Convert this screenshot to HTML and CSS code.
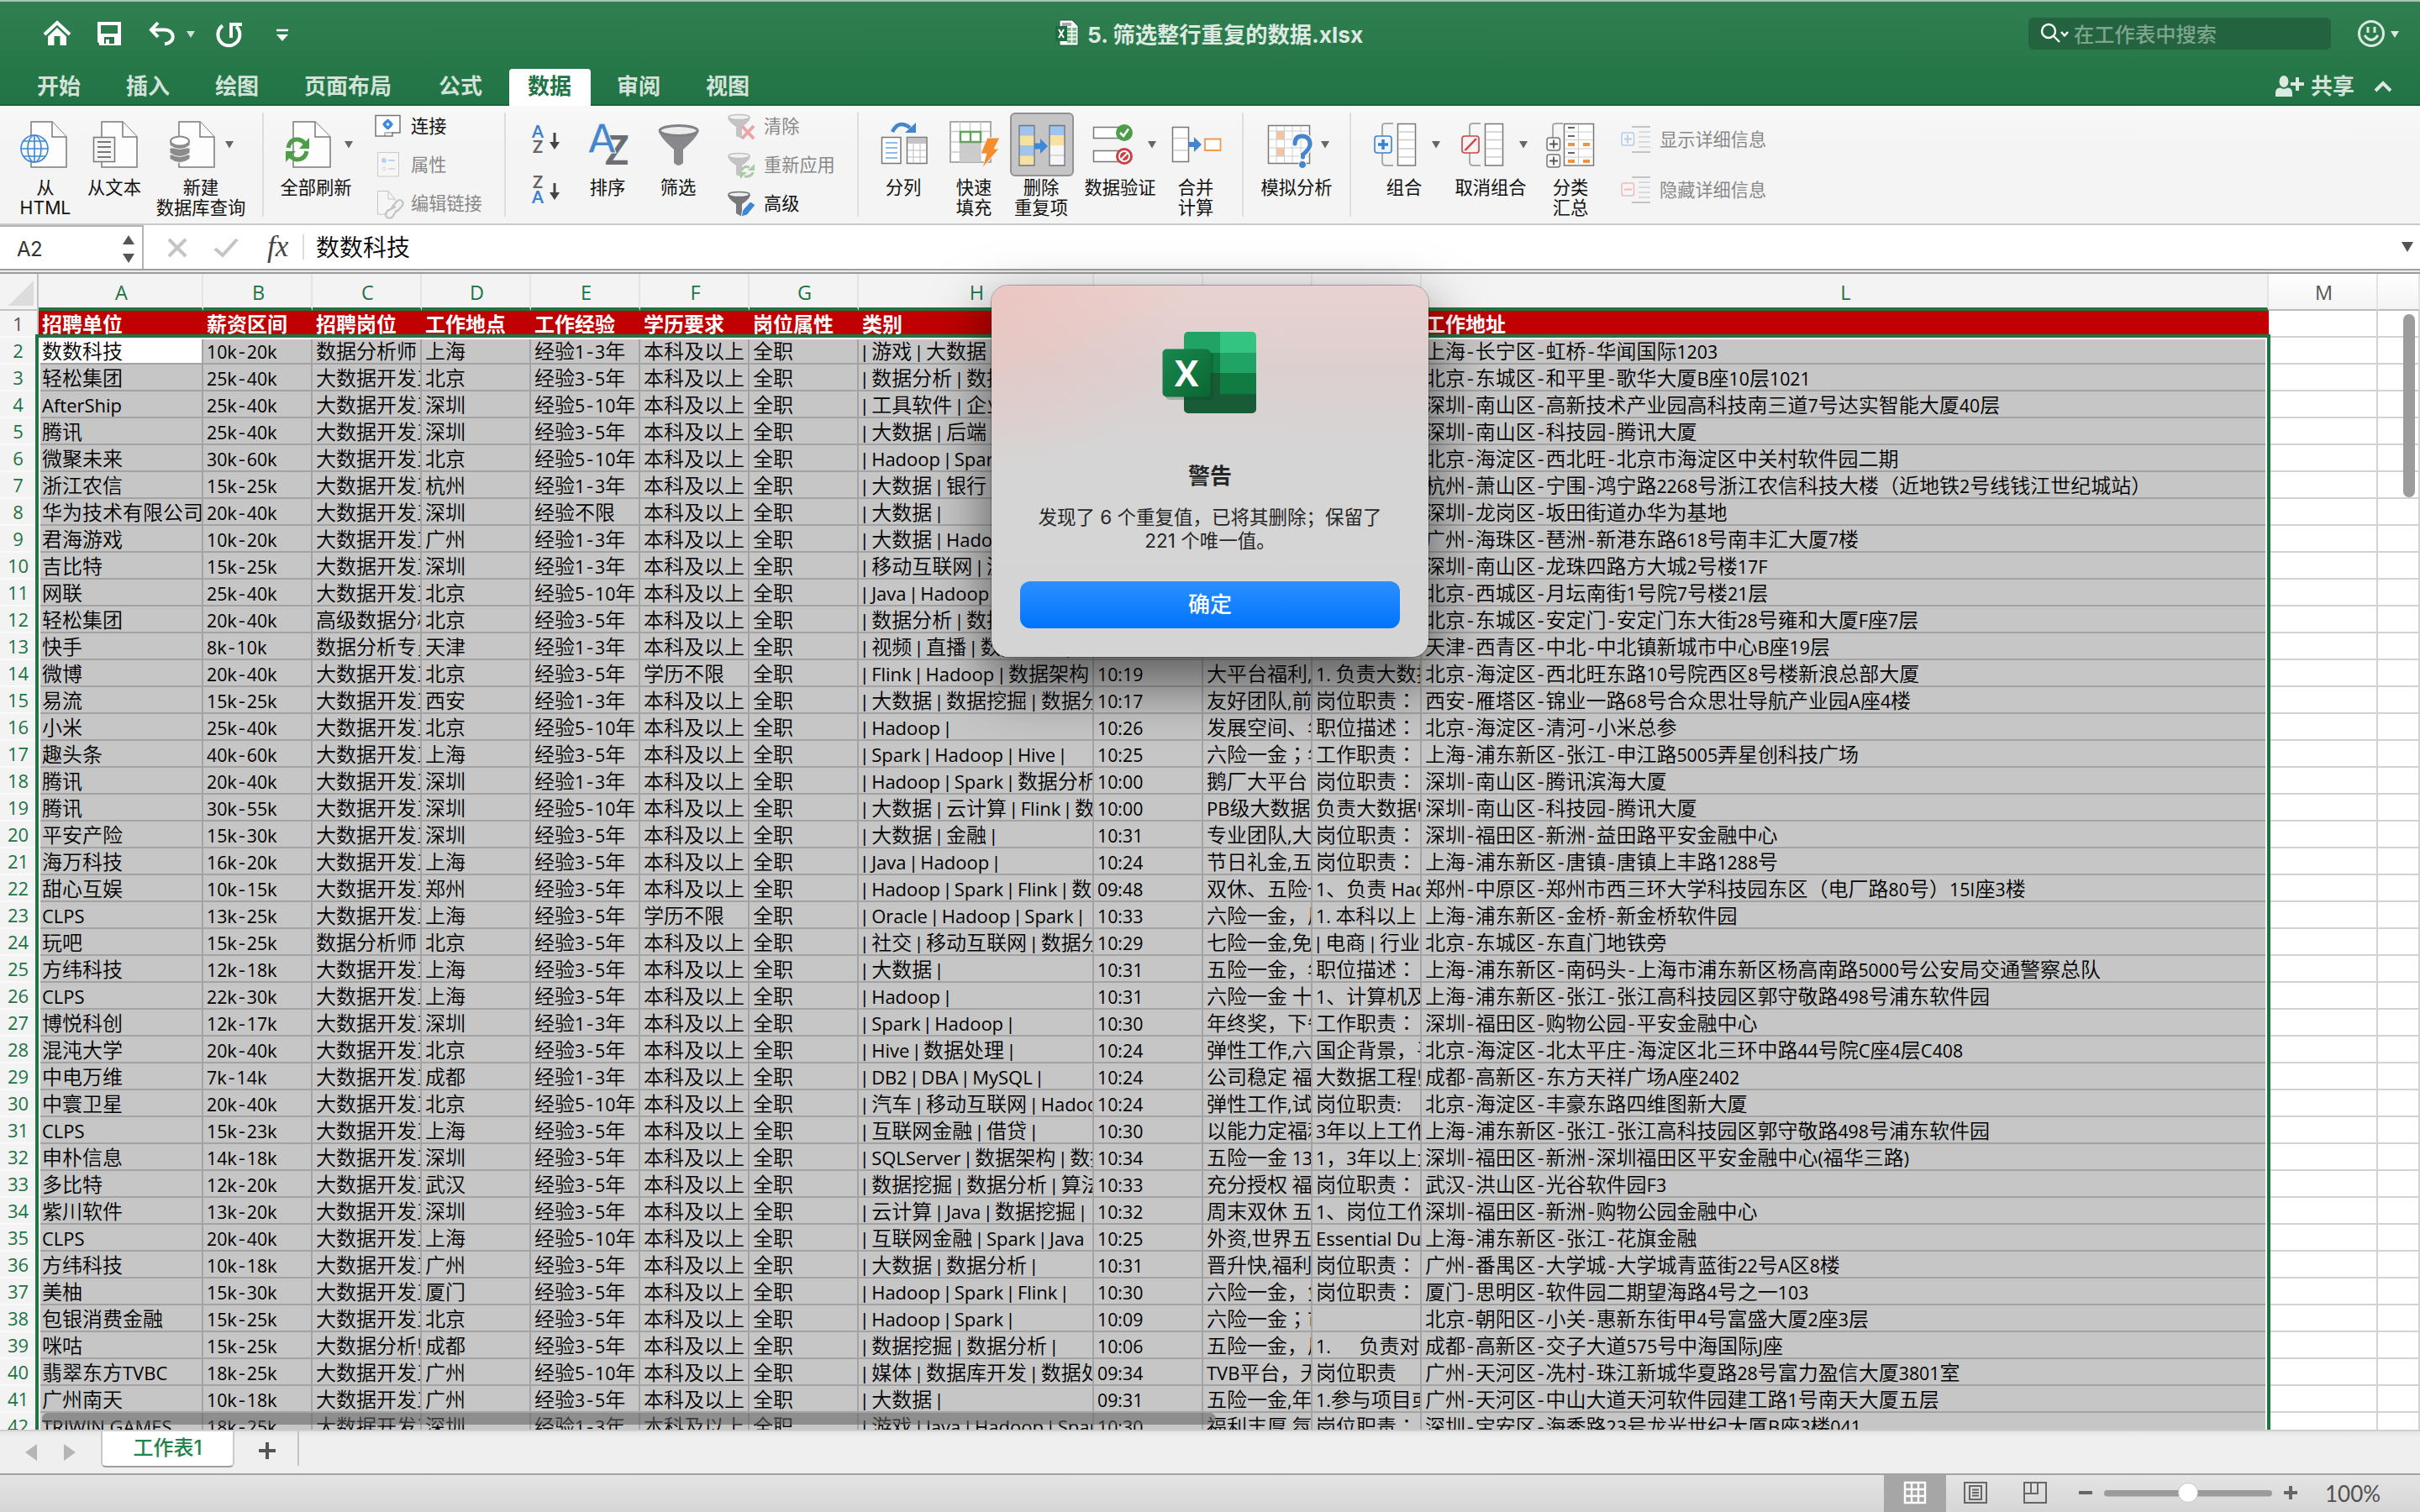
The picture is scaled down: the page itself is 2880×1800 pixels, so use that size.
FILE: index.html
```html
<!DOCTYPE html>
<html lang="zh-CN">
<head>
<meta charset="utf-8">
<title>5. 筛选整行重复的数据.xlsx</title>
<link rel="stylesheet" href="styles.css">
</head>
<body>
<div class="app">
  <header class="titlebar">
    <div class="quick">
      <svg width="400" height="80" viewBox="0 0 400 80" fill="none" stroke="#fff" stroke-width="4">
        <path d="M53 41L68 27L83 41"/><path d="M57 43.5L68 33L79 43.5V54H71.500V43H64.500V54H57Z" fill="#fff" stroke="none"/>
        <path d="M118 28H142V52H121L118 49Z"/><path d="M118 40H142V54H118Z" fill="#fff" stroke="none"/><path d="M124 44H136V52H124Z" fill="#26784a" stroke="none"/><path d="M126 47H130V53H126Z" fill="#fff" stroke="none"/>
        <path d="M188 27L180 35.500L188 44" /><path d="M181 35.500H196C209 36 209 51 196 52.500"/>
        <path d="M222 37H232L227 45Z" fill="#cfe0d5" stroke="none"/>
        <path d="M265 30.500A13 13 0 1 0 281 31.500"/><path d="M275 45V29H288" />
        <path d="M329 36H343" stroke-width="2.500"/><path d="M329 41H343L336 49Z" fill="#fff" stroke="none"/>
      </svg>
    </div>
    <div class="doc-title">
      <svg width="28" height="32" viewBox="0 0 28 32"><path d="M5 1H20L27 8V31H5Z" fill="#fff" stroke="#1c5f38"/><path d="M8 4H19V8H8Z" fill="#a9a9a9"/><path d="M14 10H25V28H14Z" fill="#79b98a"/><path d="M14 14.500H25M14 19H25M14 23.500H25M19.500 10V28" stroke="#fff" stroke-width="1.500"/><path d="M0 8H14V26H0Z" fill="#1f6b40"/><path d="M4 12L10 22M10 12L4 22" stroke="#fff" stroke-width="2"/></svg>
      <span>5. 筛选整行重复的数据.xlsx</span>
    </div>
    <div class="title-right">
      <div class="search">
        <svg width="40" height="38" viewBox="0 0 40 38" fill="none" stroke="#fff" stroke-width="2.400"><circle cx="16" cy="16" r="8"/><path d="M22 22L29 29"/><path d="M31 17L35 21.500L39 17"/></svg>
        <span>在工作表中搜索</span>
      </div>
      <svg width="60" height="38" viewBox="0 0 60 38" fill="none" stroke="#dbe9e0" stroke-width="3"><circle cx="18" cy="19" r="14.500"/><path d="M10 21Q18 32 26 21"/><path d="M14 11V18M22 11V18"/><path d="M41 16H51L46 24Z" fill="#dbe9e0" stroke="none"/></svg>
    </div>
  </header>
  <nav class="tabs">
    <span class="tab">开始</span><span class="tab">插入</span><span class="tab">绘图</span><span class="tab wide">页面布局</span><span class="tab">公式</span><span class="tab active">数据</span><span class="tab">审阅</span><span class="tab">视图</span>
    <div class="share">
      <svg width="36" height="28" viewBox="0 0 36 28" fill="#dbe9e0"><ellipse cx="11" cy="8" rx="5.500" ry="7"/><path d="M1 26V22Q1 15 7 15.500Q11 18 15 15.500Q21 15 21 22V26Z"/><path d="M19 9H25V3H29V9H35V13H29V19H25V13H19Z"/></svg>
      <span>共享</span>
      <svg class="chev" width="22" height="16" viewBox="0 0 22 16" fill="none" stroke="#dbe9e0" stroke-width="4"><path d="M2 13L11 4L20 13"/></svg>
    </div>
  </nav>

  <section class="ribbon">
    <div class="tool t-html">
      <svg viewBox="14 126 80 84"><g class="doc"><path d="M37 145H62L79 163V199H37Z"/><path d="M62 145V163H79"/></g><g fill="#f7fbff" stroke="#3f86d2" stroke-width="1.600"><circle cx="41" cy="177" r="16"/><ellipse cx="41" cy="177" rx="8" ry="16" fill="none"/><path d="M41 161V193M25 177H57M28 168H54M28 186H54"/></g></svg>
      <span>从<br>HTML</span></div>
    <div class="tool t-text">
      <svg viewBox="96 126 80 84"><g class="doc"><path d="M121 145H146L163 163V199H121Z"/><path d="M146 145V163H163"/></g><path d="M111.500 163.500H136.500V192.500H111.500Z" fill="#f4f4f4" stroke="#777" stroke-width="1.500"/><path d="M116 169H132M116 175H132M116 181H132M116 187H132" stroke="#777" stroke-width="2"/></svg>
      <span>从文本</span></div>
    <div class="tool t-query">
      <svg viewBox="180 126 118 84"><g class="doc"><path d="M213 145H238L255 163V199H213Z"/><path d="M238 145V163H255"/></g><g fill="#8b8b8e" stroke="#f5f5f5"><path d="M202 184V189Q214 198 226 189V184Z"/><path d="M202 176V182Q214 191 226 182V176Z"/><path d="M202 167V173Q214 182 226 173V167Z"/></g><ellipse cx="214" cy="168" rx="11" ry="5.500" fill="#fff" stroke="#8b8b8e" stroke-width="2"/><path class="caret" d="M268 168H278L273 176.500Z"/></svg>
      <span>新建<br>数据库查询</span></div>
    <i class="sep s1"></i>
    <div class="tool t-refresh">
      <svg viewBox="326 126 100 84"><g class="doc"><path d="M349 145H375L393 163V199H349Z"/><path d="M375 145V163H393"/></g><g fill="none" stroke="#4f9c49" stroke-width="5"><path d="M343 176Q345 165 355 166Q360 167 363 171"/><path d="M365 180Q363 190 353 190Q348 189 345 185"/></g><path d="M368 164V177H356ZM340 193V180H352Z" fill="#4f9c49"/><path class="caret" d="M410 168H420L415 176.500Z"/></svg>
      <span>全部刷新</span></div>
    <div class="stack k1">
      <div><svg viewBox="440 127 46 46"><path d="M447 137.500H476V158H467V162H447Z" fill="#fff" stroke="#777" stroke-width="1.500"/><path d="M458 162V158H468" fill="none" stroke="#777"/><circle cx="461.500" cy="148" r="3.500" fill="none" stroke="#3c8be0" stroke-width="3.500"/><path d="M461.500 142V145M461.500 151V154M455.500 148H458M465 148H467.500" stroke="#3c8be0" stroke-width="3"/></svg><span>连接</span></div>
      <div class="off"><svg viewBox="440 173 46 46"><path d="M449.500 181.500H474.500V210H449.500Z" fill="#fafafa" stroke="#999"/><circle cx="457" cy="191" r="3" fill="#74aae8"/><path d="M462 191H470" stroke="#74aae8" stroke-width="2"/><circle cx="457" cy="201" r="2" fill="none" stroke="#aaa"/><path d="M462 201H470" stroke="#aaa" stroke-width="1.500"/></svg><span>属性</span></div>
      <div class="off"><svg viewBox="440 219 46 46" fill="none" stroke="#888"><path d="M461 255H449.500V227.500H462L470 237V239" fill="#fafafa"/><path d="M462 227.500V237H470"/><path d="M466 247L472 240Q476 236 479 240Q481 243 477 247L472 252M471 246L461 251Q457 256 461 259Q465 261 468 257L472 250" stroke-width="2.200"/></svg><span>编辑链接</span></div>
    </div>
    <i class="sep s2"></i>
    <div class="tool t-az">
      <svg viewBox="626 126 48 140" class="tall"><g font-family="Lato" font-size="20" text-anchor="middle" font-weight="bold"><text x="640" y="164" fill="#3c80d0">A</text><text x="640" y="182" fill="#666">Z</text><text x="640" y="224" fill="#666">Z</text><text x="640" y="242" fill="#3c80d0">A</text></g><path d="M658.500 158H661.500V169H666L660 178L654 169H658.500ZM658.500 218H661.500V229H666L660 238L654 229H658.500Z" fill="#444"/></svg></div>
    <div class="tool t-sort">
      <svg viewBox="688 126 70 84"><g font-family="Lato" font-weight="bold"><text x="720" y="196" font-size="47" fill="#6d6d74">Z</text><text x="700" y="182" font-size="47" fill="#4585cd" stroke="#f5f5f5" stroke-width="1">A</text></g></svg>
      <span>排序</span></div>
    <div class="tool t-filter">
      <svg viewBox="772 126 70 84"><path d="M784 156Q785 163 802 178V194Q807.500 200 813 194V178Q830 163 831.500 156Z" fill="#88888d"/><ellipse cx="807.700" cy="155.500" rx="22.500" ry="6" fill="#ececec" stroke="#808085" stroke-width="3"/></svg>
      <span>筛选</span></div>
    <div class="stack k2">
      <div class="off"><svg viewBox="860 127 46 46"><path d="M866 140Q867 145 876 151V162L883 165V151Q892 145 893 140Z" fill="#88888d"/><ellipse cx="879.500" cy="139.500" rx="12.500" ry="3" fill="#eee" stroke="#808085" stroke-width="1.500"/><path d="M883 150L897 165M897 150L883 165" stroke="#d94a4a" stroke-width="4"/></svg><span>清除</span></div>
      <div class="off"><svg viewBox="860 173 46 46"><path d="M866 186Q867 191 876 197V208L883 211V197Q892 191 893 186Z" fill="#88888d"/><ellipse cx="879.500" cy="185.500" rx="12.500" ry="3" fill="#eee" stroke="#808085" stroke-width="1.500"/><g fill="none" stroke="#4f9c49" stroke-width="3"><path d="M883 203Q884 197 892 199"/><path d="M896 205Q894 211 886 210"/></g><path d="M898 195V203H890ZM881 213V205H889Z" fill="#4f9c49"/></svg><span>重新应用</span></div>
      <div><svg viewBox="860 219 46 46"><path d="M866 232Q867 237 876 243V254L883 258V243Q892 237 893 232Z" fill="#77777c"/><ellipse cx="879.500" cy="231.500" rx="12.500" ry="3" fill="#eee" stroke="#707075" stroke-width="1.500"/><path d="M893 240L899 244L889 256L882 258L884 250Z" fill="#3d86d6" stroke="#f5f5f5"/></svg><span>高级</span></div>
    </div>
    <i class="sep s3"></i>
    <div class="tool t-split">
      <svg viewBox="1040 126 70 84"><path d="M1062 157Q1069 142 1083 152" fill="none" stroke="#4585cd" stroke-width="4.500"/><path d="M1090 146V158H1077Z" fill="#4585cd"/><path d="M1049.500 163.500H1072V194.500H1049.500ZM1079.500 163.500H1103V194.500H1079.500Z" fill="#fff" stroke="#777" stroke-width="1.500"/><path d="M1054 170H1068M1054 176H1068M1054 182H1068M1054 188H1068" stroke="#8fbbe9" stroke-width="2"/><path d="M1080 164H1102V171H1080Z" fill="#c4c4c6"/><path d="M1080 179H1102M1080 187H1102M1087 171V194M1095 171V194" stroke="#bbb"/></svg>
      <span>分列</span></div>
    <div class="tool t-flash">
      <svg viewBox="1124 126 70 84"><path d="M1131 145H1179V193H1131Z" fill="#fff" stroke="#aaa" stroke-width="2"/><path d="M1142 169H1167V193H1142Z" fill="#ccc"/><path d="M1131 156.500H1179M1131 169H1179M1131 181H1179M1142.500 145V193M1154.500 145V193M1167 145V193" stroke="#c9c9c9" stroke-width="1.500"/><path d="M1143 157H1167V169H1143ZM1155 157V169" fill="#fff" stroke="#63a35c" stroke-width="2.400"/><path d="M1175 164H1190L1183 177H1189L1169 200L1174 183H1167Z" fill="#f58d2c" stroke="#f5f5f5"/></svg>
      <span>快速<br>填充</span></div>
    <div class="tool t-dedupe">
      <svg viewBox="1200 126 78 84"><rect x="1203" y="135" width="74" height="74" rx="5" fill="#c5c5c5" stroke="#929292" stroke-width="2"/><path d="M1213 149H1231V161H1213ZM1213 173H1231V185H1213ZM1249 149H1267V161H1249Z" fill="#9fc4ef"/><path d="M1213 161H1231V173H1213ZM1213 185H1231V197H1213ZM1249 161H1267V173H1249Z" fill="#f7e1a0"/><path d="M1249 173H1267V197H1249Z" fill="#f6f6f6"/><path d="M1249 185H1267M1213 161H1231M1213 185H1231" stroke="#bbb"/><path d="M1213 149.500H1231V197H1213ZM1249 149.500H1267V197H1249Z" fill="none" stroke="#6c7684" stroke-width="1.300"/><path d="M1231 170.500H1238V165L1247 174L1238 183V177.500H1231Z" fill="#3a87dc"/></svg>
      <span>删除<br>重复项</span></div>
    <div class="tool t-valid">
      <svg viewBox="1282 126 102 84"><path d="M1301.500 151.500H1335V164.500H1301.500ZM1301.500 179.500H1335V192.500H1301.500Z" fill="#fff" stroke="#777" stroke-width="1.500"/><circle cx="1338" cy="158" r="10" fill="#4f9c49"/><path d="M1333 158L1337 162L1343 153.500" fill="none" stroke="#fff" stroke-width="2.500"/><circle cx="1338" cy="186" r="10" fill="#c94144"/><circle cx="1338" cy="186" r="6" fill="none" stroke="#fff" stroke-width="2"/><path d="M1334 190L1342 182" stroke="#fff" stroke-width="2"/><path class="caret" d="M1366 168H1376L1371 176.500Z"/></svg>
      <span>数据验证</span></div>
    <div class="tool t-merge">
      <svg viewBox="1388 126 70 84"><path d="M1395.500 151.500H1414.500V192.500H1395.500Z" fill="#fff" stroke="#777" stroke-width="1.500"/><path d="M1396 164.500H1414M1396 179H1414" stroke="#ccc" stroke-width="1.500"/><path d="M1415 169H1421V163L1430 172L1421 181V175H1415Z" fill="#4585cd"/><path d="M1434 165.500H1452.500V179H1434Z" fill="#fff" stroke="#f09a4e" stroke-width="1.800"/></svg>
      <span>合并<br>计算</span></div>
    <i class="sep s4"></i>
    <div class="tool t-whatif">
      <svg viewBox="1495 126 96 84"><path d="M1509.500 149.500H1558.500V194.500H1509.500Z" fill="#fff" stroke="#777" stroke-width="1.500"/><path d="M1519 156H1528V166H1519ZM1519 176H1528V186H1519Z" fill="#f3c49f"/><path d="M1510 156H1558M1510 166H1558M1510 176H1558M1510 186H1558M1519 150V194M1528.500 150V194M1538 150V194M1548 150V194" stroke="#ccc"/><g fill="none" stroke-linecap="round"><path d="M1541 171Q1541 162 1550 162Q1560 163 1559 173Q1557 179 1550.500 184V187" stroke="#f8f8f8" stroke-width="8"/><path d="M1541 171Q1541 162 1550 162Q1560 163 1559 173Q1557 179 1550.500 184V187" stroke="#4585cd" stroke-width="5"/></g><circle cx="1550" cy="196" r="4.500" fill="#4585cd" stroke="#f8f8f8"/><path class="caret" d="M1572 168H1582L1577 176.500Z"/></svg>
      <span>模拟分析</span></div>
    <i class="sep s5"></i>
    <div class="tool t-group">
      <svg viewBox="1630 126 86 84"><path d="M1658 147H1649Q1645 147 1645 150V193Q1645 197 1649 197H1658" fill="none" stroke="#aaa" stroke-width="2"/><path d="M1663.500 147.500H1684.500V197H1663.500Z" fill="#fff" stroke="#777" stroke-width="1.500"/><path d="M1664 157H1684M1664 166.500H1684M1664 177H1684M1664 187H1684" stroke="#ccc" stroke-width="1.300"/><rect x="1636" y="162" width="20" height="20" rx="3" fill="#eef5fd" stroke="#3f80cc" stroke-width="1.600"/><path d="M1640 172H1652M1646 166V178" stroke="#3f80cc" stroke-width="3.500"/><path class="caret" d="M1704 168H1714L1709 176.500Z"/></svg>
      <span>组合</span></div>
    <div class="tool t-ungroup">
      <svg viewBox="1728 126 92 84"><path d="M1762 147H1753Q1749 147 1749 150V193Q1749 197 1753 197H1762" fill="none" stroke="#aaa" stroke-width="2"/><path d="M1767.500 147.500H1788.500V197H1767.500Z" fill="#fff" stroke="#777" stroke-width="1.500"/><path d="M1768 157H1788M1768 166.500H1788M1768 177H1788M1768 187H1788" stroke="#ccc" stroke-width="1.300"/><rect x="1740" y="162" width="20" height="20" rx="3" fill="#fdf2f2" stroke="#cb4347" stroke-width="1.600"/><path d="M1743.500 179L1757 165" stroke="#cb4347" stroke-width="2.500"/><path class="caret" d="M1808 168H1818L1813 176.500Z"/></svg>
      <span>取消组合</span></div>
    <div class="tool t-subtotal">
      <svg viewBox="1834 126 70 84"><path d="M1860 147H1852Q1848 147 1848 150V164" fill="none" stroke="#aaa" stroke-width="2"/><path d="M1861.500 147.500H1896.500V197H1861.500Z" fill="#fff" stroke="#777" stroke-width="1.500"/><path d="M1862 157H1896M1862 166.500H1896M1862 177H1896M1862 187H1896M1878.500 148V197" stroke="#ccc" stroke-width="1.200"/><path d="M1866 152H1874M1866 162H1874M1866 182H1874" stroke="#666" stroke-width="2"/><path d="M1866 172H1874M1884 172H1892M1866 192H1874M1884 192H1892" stroke="#f0923f" stroke-width="4"/><g fill="#fafafa" stroke="#777" stroke-width="1.500"><rect x="1841" y="164" width="15.500" height="15" rx="3"/><rect x="1841" y="184" width="15.500" height="15" rx="3"/></g><path d="M1844 171.500H1854M1849 166.500V176.500M1844 191.500H1854M1849 186.500V196.500" stroke="#555" stroke-width="1.800"/></svg>
      <span>分类<br>汇总</span></div>
    <div class="stack k3">
      <div class="off"><svg viewBox="1924 136 46 60"><rect x="1930" y="158" width="14.500" height="15" rx="2.500" fill="#f3f8fd" stroke="#6a9fda" stroke-width="1.500"/><path d="M1933 165.500H1942M1937 160.500V170.500" stroke="#6a9fda" stroke-width="2"/><path d="M1942 151H1964M1942 181H1964" stroke="#888" stroke-width="2"/><path d="M1950 157H1964M1950 163H1964M1950 169H1964M1950 175H1964" stroke="#bbb" stroke-width="2"/></svg><span>显示详细信息</span></div>
      <div class="off"><svg viewBox="1924 196 46 60"><rect x="1930" y="218" width="14.500" height="15" rx="2.500" fill="#fdf4f4" stroke="#dc7a7c" stroke-width="1.500"/><path d="M1933 225.500H1942" stroke="#dc7a7c" stroke-width="2"/><path d="M1942 211H1964M1942 241H1964" stroke="#888" stroke-width="2"/><path d="M1950 217H1964M1950 223H1964M1950 229H1964M1950 235H1964" stroke="#bbb" stroke-width="2"/></svg><span>隐藏详细信息</span></div>
    </div>
  </section>

  <section class="formula">
    <div class="namebox"><span>A2</span><svg width="16" height="34" viewBox="0 0 16 34" fill="#555"><path d="M1 12H15L8 1Z"/><path d="M1 23H15L8 34Z"/></svg></div>
    <svg width="190" height="52" viewBox="170 268 190 52" fill="none" stroke="#c4c4c4" stroke-width="4"><path d="M200 285L220 305M220 285L200 305"/><path d="M255 296L264 304L281 285"/></svg>
    <span class="fx">fx</span><i class="fsep"></i>
    <span class="ftext">数数科技</span>
    <svg class="fdown" width="14" height="12" viewBox="0 0 14 12"><path d="M0 0H14L7 12Z" fill="#555"/></svg>
  </section>

  <div class="colheads" id="colheads"></div>
  <main class="sheet"><div id="rows"></div>
    <div class="selection"></div>
    <div class="vthumb"></div><div class="hthumb"></div>
  </main>

  <footer class="sheetbar">
    <svg width="120" height="50" viewBox="0 0 120 50" fill="#b5b5b5"><path d="M44 15V35L30 25ZM76 15V35L90 25Z"/></svg>
    <div class="sheettab">工作表1</div>
    <svg width="77" height="50" viewBox="279 0 77 50"><path d="M308 23H328M318 13V33" stroke="#555" stroke-width="4"/><path d="M355 0V41" stroke="#c4c4c4" stroke-width="2"/></svg>
  </footer>
  <div class="status">
    <svg width="590" height="44" viewBox="2242 1756 590 44" fill="none" stroke="#666" stroke-width="2">
      <path d="M2242 1756H2316V1800H2242Z" fill="#a6a6a6" stroke="none"/>
      <path d="M2267 1765H2291V1789H2267ZM2275 1765V1789M2283 1765V1789M2267 1773H2291M2267 1781H2291" stroke="#fff" stroke-width="2.400"/>
      <path d="M2338 1765H2364V1789H2338ZM2344 1769H2358V1785H2344ZM2347 1773.500H2355M2347 1777H2355M2347 1780.500H2355"/>
      <path d="M2409 1765H2435V1789H2409ZM2409 1778H2425V1765M2417 1765V1778"/>
      <path d="M2474 1777H2490M2718 1777H2734M2726 1769V1785" stroke-width="4"/>
      <rect x="2504" y="1774" width="200" height="7.500" rx="3.700" fill="#9b9b9b" stroke="none"/>
      <circle cx="2604" cy="1777" r="11.500" fill="#fff" stroke="#c6c6c6" stroke-width="1"/>
    </svg>
    <span class="zoom">100%</span>
  </div>

  <div class="dialog">
    <svg width="116" height="100" viewBox="1382 393 116 100">
      <defs><linearGradient id="xg" x1="0" y1="0" x2="1" y2="1"><stop offset="0" stop-color="#18884f"/><stop offset="1" stop-color="#0b6731"/></linearGradient><clipPath id="xc"><rect x="1409" y="395" width="86" height="97" rx="5"/></clipPath></defs>
      <g clip-path="url(#xc)"><path d="M1409 395H1452V420H1409Z" fill="#21a366"/><path d="M1452 395H1495V420H1452Z" fill="#33c481"/><path d="M1409 420H1452V444H1409Z" fill="#107c41"/><path d="M1452 420H1495V444H1452Z" fill="#21a366"/><path d="M1409 444H1495V492H1409Z" fill="#185c37"/><path d="M1452 444H1495V469H1452Z" fill="#107c41"/></g>
      <rect x="1387" y="419" width="57" height="57" rx="5" fill="#0a3a20" opacity=".25"/>
      <rect x="1383.500" y="415.500" width="57" height="57" rx="5" fill="url(#xg)"/>
      <text x="1412" y="460" font-family="Open Sans" font-weight="bold" font-size="43" fill="#fff" text-anchor="middle">X</text>
    </svg>
    <h1>警告</h1>
    <p>发现了 6 个重复值，已将其删除；保留了<br>221 个唯一值。</p>
    <button>确定</button>
  </div>
</div>
<script src="app.js"></script>
</body>
</html>
```
FILE: styles.css
```css
* { box-sizing: border-box; }
body { margin: 0; width: 2880px; height: 1800px; overflow: hidden; font-family: "Inter", "Noto Sans CJK SC", sans-serif; }
.app { position: relative; display: flex; flex-direction: column; width: 2880px; height: 1800px; background: #fff; }
svg { display: block; flex: none; }
i, b { font-style: normal; }

.titlebar { display: grid; grid-template-columns: 1256px 1fr 466px; height: 80px; border-top: 2px solid #a5c6b2; background: linear-gradient(#317f51, #267748); }
.quick svg { margin-top: -2px; }
.doc-title { display: flex; align-items: center; gap: 10px; height: 74px; color: #dde9e1; font: bold 26.3px "Inter", "Noto Sans CJK SC", sans-serif; white-space: nowrap; }
.title-right { display: flex; gap: 14px; padding-top: 19px; }
.search { display: flex; align-items: center; gap: 6px; width: 360px; height: 38px; padding: 0 0 1px 8px; border-radius: 6px; background: #23633f; color: #7fa58e; font-size: 24.3px; font-weight: 500; }
.title-right > svg { margin-left: 16px; }
.tabs { display: flex; height: 46px; padding: 2px 0 0 17px; background: linear-gradient(#267748, #217346); color: #d3e3d9; font-size: 26px; line-height: 41px; font-weight: 600; box-shadow: inset 0 -2px #1c633b; }
.tab { padding: 0 27px; }
.tab.wide { padding-right: 29px; }
.tab.active { margin: 0 4px 0 5px; padding: 0 23px 0 22px; border-radius: 4px 4px 0 0; background: #fff; color: #217346; font-weight: 700; }
.share { display: flex; align-items: center; gap: 7px; margin-left: auto; padding: 0 33px 3px 0; }
.share .chev { margin-left: 16px; }

.ribbon { display: flex; height: 142px; border-bottom: 2px solid #c8c8c8; background: linear-gradient(#f8f8f8, #f4f4f4 35%); color: #111; }
.tool { flex: none; text-align: center; font-size: 21.3px; line-height: 24px; white-space: nowrap; }
.tool svg { width: 100%; height: 84px; margin-bottom: 1px; }
.tool svg.tall { height: 140px; }
.tool span { display: block; margin: 0 -10px; }
.doc path { fill: #fdfdfd; stroke: #7a7a7a; stroke-width: 1.5; }
.caret { fill: #666; }
.sep { width: 2px; height: 124px; margin-top: 8px; background: #dedede; }
.t-html { width: 80px; margin-left: 14px; }
.t-text { width: 80px; margin-left: 2px; }
.t-query { width: 118px; margin-left: 4px; }
.s1 { margin-left: 14px; }
.t-refresh { width: 100px; margin-left: 12px; }
.k1 { width: 140px; margin-left: 14px; }
.s2 { margin-left: 20px; }
.t-az { width: 48px; margin-left: 24px; }
.t-sort { width: 70px; margin-left: 14px; }
.t-filter { width: 70px; margin-left: 14px; }
.k2 { width: 140px; margin-left: 18px; }
.s3 { margin-left: 20px; }
.t-split { width: 70px; margin-left: 18px; }
.t-flash { width: 70px; margin-left: 14px; }
.t-dedupe { width: 78px; margin-left: 6px; }
.t-valid { width: 102px; margin-left: 4px; }
.t-merge { width: 70px; margin-left: 4px; }
.s4 { margin-left: 20px; }
.t-whatif { width: 96px; margin-left: 15px; }
.s5 { margin-left: 15px; }
.t-group { width: 86px; margin-left: 22px; }
.t-group span { margin: 0 -1px 0 -5px; }
.t-ungroup { width: 92px; margin-left: 12px; }
.t-subtotal { width: 70px; margin-left: 14px; }
.k3 { width: 200px; margin-left: 20px; }
.stack { flex: none; padding-top: 1px; font-size: 21.2px; white-space: nowrap; }
.stack div { display: flex; align-items: center; gap: 3px; height: 46px; }
.stack span { padding-bottom: 3px; }
.stack svg { width: 46px; height: 46px; }
.k2 svg, .k3 svg { overflow: visible; }
.stack .off { color: #888; }
.stack .off svg { opacity: .45; }
.k3 { padding-top: 10px; }
.k3 div { height: 60px; gap: 5px; }
.k3 svg { height: 60px; }

.formula { display: flex; align-items: center; height: 52px; background: #fff; }
.namebox { display: flex; align-items: center; justify-content: space-between; width: 171px; height: 52px; padding: 2px 8px 0 20px; border: 2px solid #b4b4b4; border-left: 0; border-bottom: 0; color: #333; font-size: 24px; letter-spacing: -.5px; }
.fx { margin-left: -43px; width: 39px; color: #444; font: italic 35px "Liberation Serif", serif; }
.fsep { width: 2px; height: 30px; margin-left: 3px; background: #dcdcdc; }
.ftext { margin-left: 14px; font-family: "Noto Sans CJK SC", sans-serif; font-size: 28px; font-weight: 350; line-height: 50px; padding-bottom: 2px; }
.fdown { margin: 0 8px 0 auto; }

.colheads, .row { display: grid; grid-template-columns: 46px 196px repeat(6, 130px) 280px repeat(3, 130px) 1008px 130px 50px; }
.colheads { height: 50px; padding-top: 6px; background: linear-gradient(#a0a0a0 2px, #ececec 2px, #ececec 4px, #9a9a9a 4px, #9a9a9a 6px, #f3f3f3 6px); font: 23.5px/42px "Open Sans", sans-serif; color: #217346; text-align: center; }
.colheads span { height: 44px; padding: 1px 0 0 3px; border-right: 2px solid #e4e4e4; border-bottom: 4px solid #217346; background: #f3f3f3; }
.colheads .corner { padding: 8px 0 0 10px; border-right-color: #c2c2c2; border-bottom: 2px solid #c2c2c2; }
.colheads .plain { border-bottom: 2px solid #bcbcbc; background: linear-gradient(#fff, #f4f4f4); color: #555; }
.sheet { position: relative; height: 1334px; overflow: hidden; border-bottom: 2px solid #cfcfcf; font-family: "Noto Sans CJK SC", sans-serif; font-size: 24px; color: #000; }
.row { height: 32px; line-height: 30px; }
.row > * { height: 32px; overflow: hidden; white-space: pre; padding-left: 4px; border-right: 2px solid #a3a3a3; border-bottom: 2px solid #a3a3a3; background: #c6c6c6; font-weight: 350; }
.row > .num { padding: 0 1px 0 0; border-right: 2px solid #c2c2c2; border-bottom: 2px solid #fafafa; background: #f3f3f3; color: #217346; font: 22px/30px "Open Sans", sans-serif; text-align: center; }
.row > .blank { background: #fff; border-color: #d2d2d2; }
.row.head > .cell { background: #c00000; border-color: #c00000; color: #fff; font-weight: 700; }
.row.head > .num { color: #555; }
.row > .current { background: #fff; }
.lat { font-family: "Open Sans", sans-serif; font-size: 22px; font-weight: 400; }
.dig { font-family: "Open Sans", sans-serif; font-size: 21.3px; font-weight: 400; }
.bar { font-family: "Lato", sans-serif; font-size: 22px; font-weight: 400; }
.mid { font-family: "Noto Sans CJK TC", sans-serif; }
.hy { display: inline-block; width: 11.8px; font-weight: 350; text-align: center; }
.selection { position: absolute; left: 42px; top: 28px; width: 2660px; height: 1400px; border: 4px solid #217346; box-shadow: inset 0 0 0 2px #fff; }
.vthumb { position: absolute; left: 2860px; top: 4px; width: 14px; height: 218px; border-radius: 7px; background: #9c9c9c; }
.hthumb { position: absolute; left: 50px; top: 1312px; width: 1397px; height: 14px; border-radius: 7px; background: rgba(95, 95, 95, .55); }

.sheetbar { display: flex; height: 50px; background: linear-gradient(#e6e6e6, #efefef 8px); }
.sheettab { width: 159px; height: 43px; border: 2px solid #c9c9c9; border-top: 0; border-bottom-color: #9e9e9e; border-radius: 0 0 6px 6px; background: #fff; color: #21844b; font-size: 24px; line-height: 40px; font-weight: 500; text-align: center; }
.status { display: flex; align-items: center; height: 46px; padding-left: 2242px; border-top: 2px solid #a2a2a2; background: linear-gradient(#e4e4e4, #d6d6d6); }
.zoom { margin-left: -65px; color: #505050; font: 26px "Lato", sans-serif; }

.dialog { position: absolute; left: 1180px; top: 340px; width: 520px; height: 442px; display: flex; flex-direction: column; align-items: center; padding-top: 53px; border-radius: 20px; background: radial-gradient(circle at 0 0, rgba(238, 190, 184, .6), transparent 230px), linear-gradient(#ead1cf, #dcd0cf 22%, #d5d5d5 45%, #d4d4d4); box-shadow: 0 0 1px 1px rgba(0, 0, 0, .3), 0 30px 66px 6px rgba(0, 0, 0, .5); color: #262626; }
.dialog h1 { margin: 55px 0 0; font-size: 26px; line-height: 38px; font-weight: 700; }
.dialog p { margin: 16px 0 0; font-size: 22.5px; line-height: 28px; text-align: center; white-space: nowrap; }
.dialog button { width: 452px; height: 56px; margin: 34px 0 0; padding: 0 0 5px; border: 0; border-radius: 12px; background: linear-gradient(#2c8fff, #0074fd); color: #fff; font: 500 26px "Inter", "Noto Sans CJK SC", sans-serif; }
```
FILE: app.js
```js
const DEV = '大数据开发工程师';
const Y13 = '经验1-3年', Y35 = '经验3-5年', Y510 = '经验5-10年';
const BK = '本科及以上';
const head = ['招聘单位', '薪资区间', '招聘岗位', '工作地点', '工作经验', '学历要求', '岗位属性', '类别', '时间', '福利', '描述', '工作地址'];

// company, salary, job, city, experience, degree, tags, time, perks, description, address
const data = [
  ['数数科技', '10k-20k', '数据分析师', '上海', Y13, BK, '| 游戏 | 大数据 |', '10:20', '', '', '上海-长宁区-虹桥-华闻国际1203'],
  ['轻松集团', '25k-40k', DEV, '北京', Y35, BK, '| 数据分析 | 数据挖掘 |', '10:20', '', '', '北京-东城区-和平里-歌华大厦B座10层1021'],
  ['AfterShip', '25k-40k', DEV, '深圳', Y510, BK, '| 工具软件 | 企业服务 |', '10:20', '', '', '深圳-南山区-高新技术产业园高科技南三道7号达实智能大厦40层'],
  ['腾讯', '25k-40k', DEV, '深圳', Y35, BK, '| 大数据 | 后端 |', '10:20', '', '', '深圳-南山区-科技园-腾讯大厦'],
  ['微聚未来', '30k-60k', DEV, '北京', Y510, BK, '| Hadoop | Spark |', '10:20', '', '', '北京-海淀区-西北旺-北京市海淀区中关村软件园二期'],
  ['浙江农信', '15k-25k', DEV, '杭州', Y13, BK, '| 大数据 | 银行 |', '10:20', '', '', '杭州-萧山区-宁围-鸿宁路2268号浙江农信科技大楼（近地铁2号线钱江世纪城站）'],
  ['华为技术有限公司', '20k-40k', DEV, '深圳', '经验不限', BK, '| 大数据 |', '10:20', '', '', '深圳-龙岗区-坂田街道办华为基地'],
  ['君海游戏', '10k-20k', DEV, '广州', Y13, BK, '| 大数据 | Hadoop |', '10:20', '', '', '广州-海珠区-琶洲-新港东路618号南丰汇大厦7楼'],
  ['吉比特', '15k-25k', DEV, '深圳', Y13, BK, '| 移动互联网 | 游戏 |', '10:20', '', '', '深圳-南山区-龙珠四路方大城2号楼17F'],
  ['网联', '25k-40k', DEV, '北京', Y510, BK, '| Java | Hadoop |', '10:20', '', '', '北京-西城区-月坛南街1号院7号楼21层'],
  ['轻松集团', '20k-40k', '高级数据分析师', '北京', Y35, BK, '| 数据分析 | 数据挖掘 |', '10:20', '', '', '北京-东城区-安定门-安定门东大街28号雍和大厦F座7层'],
  ['快手', '8k-10k', '数据分析专员', '天津', Y13, BK, '| 视频 | 直播 | 数据分析 |', '10:20', '', '', '天津-西青区-中北-中北镇新城市中心B座19层'],
  ['微博', '20k-40k', DEV, '北京', Y35, '学历不限', '| Flink | Hadoop | 数据架构 |', '10:19', '大平台福利,好', '1. 负责大数据', '北京-海淀区-西北旺东路10号院西区8号楼新浪总部大厦'],
  ['易流', '15k-25k', DEV, '西安', Y13, BK, '| 大数据 | 数据挖掘 | 数据分析 |', '10:17', '友好团队,前景', '岗位职责：', '西安-雁塔区-锦业一路68号合众思壮导航产业园A座4楼'],
  ['小米', '25k-40k', DEV, '北京', Y510, BK, '| Hadoop |', '10:26', '发展空间、年终', '职位描述：', '北京-海淀区-清河-小米总参'],
  ['趣头条', '40k-60k', DEV, '上海', Y35, BK, '| Spark | Hadoop | Hive |', '10:25', '六险一金；年终', '工作职责：', '上海-浦东新区-张江-申江路5005弄星创科技广场'],
  ['腾讯', '20k-40k', DEV, '深圳', Y13, BK, '| Hadoop | Spark | 数据分析 |', '10:00', '鹅厂大平台', '岗位职责：', '深圳-南山区-腾讯滨海大厦'],
  ['腾讯', '30k-55k', DEV, '深圳', Y510, BK, '| 大数据 | 云计算 | Flink | 数据', '10:00', 'PB级大数据', '负责大数据中台', '深圳-南山区-科技园-腾讯大厦'],
  ['平安产险', '15k-30k', DEV, '深圳', Y35, BK, '| 大数据 | 金融 |', '10:31', '专业团队,大平', '岗位职责：', '深圳-福田区-新洲-益田路平安金融中心'],
  ['海万科技', '16k-20k', DEV, '上海', Y35, BK, '| Java | Hadoop |', '10:24', '节日礼金,五险', '岗位职责：', '上海-浦东新区-唐镇-唐镇上丰路1288号'],
  ['甜心互娱', '10k-15k', DEV, '郑州', Y35, BK, '| Hadoop | Spark | Flink | 数据', '09:48', '双休、五险一金', '1、负责 Hadoop', '郑州-中原区-郑州市西三环大学科技园东区（电厂路80号）15I座3楼'],
  ['CLPS', '13k-25k', DEV, '上海', Y35, '学历不限', '| Oracle | Hadoop | Spark |', '10:33', '六险一金，周末', '1. 本科以上', '上海-浦东新区-金桥-新金桥软件园'],
  ['玩吧', '15k-25k', '数据分析师', '北京', Y35, BK, '| 社交 | 移动互联网 | 数据分析', '10:29', '七险一金,免费', '| 电商 | 行业', '北京-东城区-东直门地铁旁'],
  ['方纬科技', '12k-18k', DEV, '上海', Y35, BK, '| 大数据 |', '10:31', '五险一金，年终', '职位描述：', '上海-浦东新区-南码头-上海市浦东新区杨高南路5000号公安局交通警察总队'],
  ['CLPS', '22k-30k', DEV, '上海', Y35, BK, '| Hadoop |', '10:31', '六险一金 十三', '1、计算机及相', '上海-浦东新区-张江-张江高科技园区郭守敬路498号浦东软件园'],
  ['博悦科创', '12k-17k', DEV, '深圳', Y13, BK, '| Spark | Hadoop |', '10:30', '年终奖，下午茶', '工作职责：', '深圳-福田区-购物公园-平安金融中心'],
  ['混沌大学', '20k-40k', DEV, '北京', Y35, BK, '| Hive | 数据处理 |', '10:24', '弹性工作,六险', '国企背景，平台', '北京-海淀区-北太平庄-海淀区北三环中路44号院C座4层C408'],
  ['中电万维', '7k-14k', DEV, '成都', Y13, BK, '| DB2 | DBA | MySQL |', '10:24', '公司稳定 福利', '大数据工程师', '成都-高新区-东方天祥广场A座2402'],
  ['中寰卫星', '20k-40k', DEV, '北京', Y510, BK, '| 汽车 | 移动互联网 | Hadoop', '10:24', '弹性工作,试用', '岗位职责:', '北京-海淀区-丰豪东路四维图新大厦'],
  ['CLPS', '15k-23k', DEV, '上海', Y35, BK, '| 互联网金融 | 借贷 |', '10:30', '以能力定福利', '3年以上工作经', '上海-浦东新区-张江-张江高科技园区郭守敬路498号浦东软件园'],
  ['申朴信息', '14k-18k', DEV, '深圳', Y35, BK, '| SQLServer | 数据架构 | 数据', '10:34', '五险一金 13薪', '1，3年以上大数', '深圳-福田区-新洲-深圳福田区平安金融中心(福华三路)'],
  ['多比特', '12k-20k', DEV, '武汉', Y35, BK, '| 数据挖掘 | 数据分析 | 算法 |', '10:33', '充分授权 福利', '岗位职责：', '武汉-洪山区-光谷软件园F3'],
  ['紫川软件', '13k-20k', DEV, '深圳', Y35, BK, '| 云计算 | Java | 数据挖掘 |', '10:32', '周末双休 五险', '1、岗位工作内', '深圳-福田区-新洲-购物公园金融中心'],
  ['CLPS', '20k-40k', DEV, '上海', Y510, BK, '| 互联网金融 | Spark | Java', '10:25', '外资,世界五百', 'Essential Duties', '上海-浦东新区-张江-花旗金融'],
  ['方纬科技', '10k-18k', DEV, '广州', Y35, BK, '| 大数据 | 数据分析 |', '10:31', '晋升快,福利好', '岗位职责：', '广州-番禺区-大学城-大学城青蓝街22号A区8楼'],
  ['美柚', '15k-30k', DEV, '厦门', Y35, BK, '| Hadoop | Spark | Flink |', '10:30', '六险一金，免费', '岗位职责：', '厦门-思明区-软件园二期望海路4号之一103'],
  ['包银消费金融', '15k-25k', DEV, '北京', Y35, BK, '| Hadoop | Spark |', '10:09', '六险一金；市场', '', '北京-朝阳区-小关-惠新东街甲4号富盛大厦2座3层'],
  ['咪咕', '15k-25k', '大数据分析师', '成都', Y35, BK, '| 数据挖掘 | 数据分析 |', '10:06', '五险一金，周末', '1.      负责对接', '成都-高新区-交子大道575号中海国际J座'],
  ['翡翠东方TVBC', '18k-25k', DEV, '广州', Y510, BK, '| 媒体 | 数据库开发 | 数据处理', '09:34', 'TVB平台，无限', '岗位职责', '广州-天河区-冼村-珠江新城华夏路28号富力盈信大厦3801室'],
  ['广州南天', '10k-18k', DEV, '广州', Y35, BK, '| 大数据 |', '09:31', '五险一金,年终', '1.参与项目或', '广州-天河区-中山大道天河软件园建工路1号南天大厦五层'],
  ['TRIWIN GAMES', '18k-25k', DEV, '深圳', Y13, BK, '| 游戏 | Java | Hadoop | Spark', '10:30', '福利丰厚,氛围', '岗位职责：', '深圳-宝安区-海秀路23号龙光世纪大厦B座3楼041']
];

// Letters, digits, separators and centred punctuation each use their own face; hyphens take half an em.
const format = text => text.replace(/[A-Za-z]+|[0-9.,:()]+|[| ]+|[：；]|-/g, run => {
  if (run === '-') return '<b class="hy">-</b>';
  const kind = /[A-Za-z]/.test(run) ? 'lat' : /[| ]/.test(run) ? 'bar' : /[：；]/.test(run) ? 'mid' : 'dig';
  const lang = kind === 'mid' ? ' lang="zh-TW"' : '';
  return `<i class="${kind}"${lang}>${run}</i>`;
});

const cell = (text, extra = '') => `<span class="cell ${extra}">${format(text)}</span>`;
const blanks = '<span class="blank"></span><span class="blank"></span>';

document.getElementById('colheads').innerHTML =
  '<span class="corner"><svg width="30" height="30" viewBox="0 0 30 30"><path d="M30 0V30H0Z" fill="#dcdcdc"/></svg></span>' +
  [...'ABCDEFGHIJKL'].map(c => `<span>${c}</span>`).join('') +
  '<span class="plain">M</span><span class="plain"></span>';

let html = `<div class="row head"><span class="num">1</span>${head.map(h => cell(h)).join('')}${blanks}</div>`;
data.forEach((r, i) => {
  const cells = [...r.slice(0, 6), '全职', ...r.slice(6)];
  html += `<div class="row"><span class="num">${i + 2}</span>` +
    cells.map((c, j) => cell(c, i === 0 && j === 0 ? 'current' : '')).join('') + blanks + '</div>';
});
document.getElementById('rows').innerHTML = html;
```
